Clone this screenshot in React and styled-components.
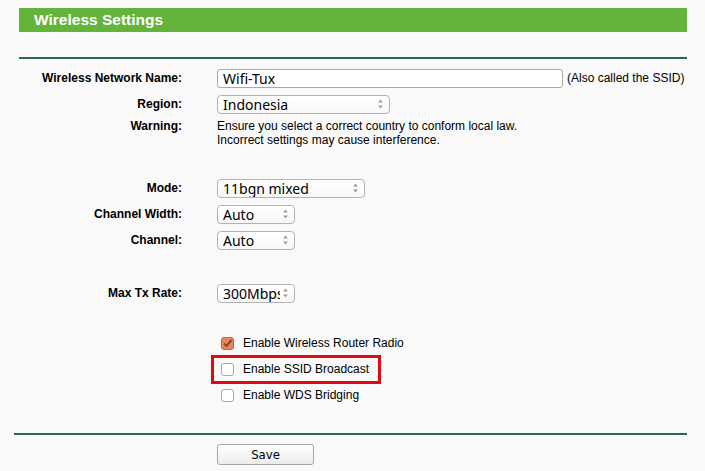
import React from "react";
import styled, { createGlobalStyle } from "styled-components";

const Global = createGlobalStyle`
  html, body { margin: 0; padding: 0; background: #f9f9f9; }
  body { font-family: "Liberation Sans", Arial, sans-serif; color: #000; }
`;

const Page = styled.div`
  width: 705px;
  height: 471px;
  overflow: hidden;
  padding-top: 8px;
  box-sizing: border-box;
`;

const Header = styled.div`
  margin-left: 19px;
  width: 668px;
  height: 24px;
  background: #64b33b;
  color: #fff;
  font-weight: bold;
  font-size: 15.5px;
  line-height: 24px;
  padding-left: 15px;
  box-sizing: border-box;
`;

const Rule = styled.div`
  margin-left: ${(p) => p.$left}px;
  width: ${(p) => 687 - p.$left}px;
  height: 2px;
  background: #2f6a48;
  margin-top: ${(p) => p.$top}px;
`;

const Form = styled.div`
  margin-left: 19px;
  width: 668px;
  padding-top: 6px;
  display: flex;
  flex-direction: column;
`;

const Row = styled.div`
  display: grid;
  grid-template-columns: 163px 1fr;
  column-gap: 35px;
  align-items: ${(p) => (p.$top ? "start" : "center")};
  height: ${(p) => p.$h || 26}px;
  margin-top: ${(p) => p.$mt || 0}px;
  position: relative;
`;

const Label = styled.div`
  text-align: right;
  font-weight: bold;
  font-size: 12px;
  line-height: 14px;
`;

const Control = styled.div`
  display: flex;
  align-items: center;
  gap: 4px;
`;

const TextInput = styled.div`
  width: 346px;
  height: 19px;
  box-sizing: border-box;
  border: 1px solid #a9a9a9;
  border-radius: 3px;
  background: #fff;
  font-family: "Noto Sans", sans-serif;
  font-size: 14px;
  line-height: 17px;
  padding-left: 5px;
`;

const Note = styled.span`
  font-size: 12px;
`;

const SelectBox = styled.div`
  width: ${(p) => p.$w}px;
  height: 19px;
  box-sizing: border-box;
  border: 1px solid #b3b3b3;
  border-radius: 4px;
  background: linear-gradient(#ffffff, #f7f7f7);
  font-family: "Noto Sans", sans-serif;
  font-size: 14px;
  line-height: 17px;
  padding-left: 5px;
  display: flex;
  align-items: center;
  overflow: hidden;
  white-space: nowrap;
`;

const SelectText = styled.span`
  overflow: hidden;
  text-overflow: clip;
  flex: 1;
  min-width: 0;
`;

const Arrows = styled.svg`
  flex: none;
  width: 7px;
  height: 12px;
  margin: 0 5px 0 2px;
`;

const WarnText = styled.div`
  font-size: 12px;
  line-height: 14px;
`;

const CheckRow = styled.div`
  display: flex;
  align-items: center;
  gap: 9px;
  padding-left: 4px;
  font-size: 12px;
  line-height: 14px;
  position: relative;
`;

const Box = styled.span`
  width: 13px;
  height: 13px;
  box-sizing: border-box;
  border-radius: 3px;
  border: 1px solid ${(p) => (p.$on ? "#c8673f" : "#a8a8a8")};
  background: ${(p) => (p.$on ? "#e8875e" : "#fff")};
  display: inline-flex;
  align-items: center;
  justify-content: center;
`;

const Highlight = styled.span`
  position: absolute;
  left: -6px;
  top: -7px;
  width: 170px;
  height: 29px;
  box-sizing: border-box;
  border: 3px solid #e30613;
  pointer-events: none;
`;

const ButtonRow = styled.div`
  display: grid;
  grid-template-columns: 163px 1fr;
  column-gap: 35px;
  margin-left: 19px;
  margin-top: 9px;
`;

const SaveButton = styled.button`
  width: 97px;
  height: 21px;
  box-sizing: border-box;
  border: 1px solid #a6a6a6;
  border-radius: 3px;
  background: linear-gradient(#ffffff, #ececec);
  font-family: "DejaVu Sans Condensed", "DejaVu Sans", sans-serif;
  font-size: 13px;
  line-height: 17px;
  padding: 0;
  color: #000;
`;

const UpDown = () => (
  <Arrows viewBox="0 0 7 12">
    <path d="M3.5 1.5 L5.8 4.5 L1.2 4.5 Z" fill="#999" />
    <path d="M3.5 10.5 L5.8 7.5 L1.2 7.5 Z" fill="#999" />
  </Arrows>
);

const Select = ({ w, children }) => (
  <SelectBox $w={w}>
    <SelectText>{children}</SelectText>
    <UpDown />
  </SelectBox>
);

const Checkbox = ({ on }) => (
  <Box $on={on}>
    {on && (
      <svg width="11" height="11" viewBox="0 0 11 11">
        <path d="M2 5.5 L4.5 8 L9.5 2" fill="none" stroke="#9c3f1d" strokeWidth="2" />
      </svg>
    )}
  </Box>
);

export default function App() {
  return (
    <Page>
      <Global />
      <Header>Wireless Settings</Header>
      <Rule $left={19} $top={25} />
      <Form>
        <Row>
          <Label>Wireless Network Name:</Label>
          <Control>
            <TextInput>Wifi-Tux</TextInput>
            <Note>(Also called the SSID)</Note>
          </Control>
        </Row>
        <Row>
          <Label>Region:</Label>
          <Control>
            <Select w={173}>Indonesia</Select>
          </Control>
        </Row>
        <Row $top $h={28} $mt={2}>
          <Label>Warning:</Label>
          <WarnText>
            Ensure you select a correct country to conform local law.
            <br />
            Incorrect settings may cause interference.
          </WarnText>
        </Row>
        <Row $mt={28}>
          <Label>Mode:</Label>
          <Control>
            <Select w={148}>11bgn mixed</Select>
          </Control>
        </Row>
        <Row>
          <Label>Channel Width:</Label>
          <Control>
            <Select w={78}>Auto</Select>
          </Control>
        </Row>
        <Row>
          <Label>Channel:</Label>
          <Control>
            <Select w={78}>Auto</Select>
          </Control>
        </Row>
        <Row $mt={27}>
          <Label>Max Tx Rate:</Label>
          <Control>
            <Select w={78}>300Mbps</Select>
          </Control>
        </Row>
        <Row $mt={24}>
          <span />
          <CheckRow>
            <Checkbox on />
            Enable Wireless Router Radio
          </CheckRow>
        </Row>
        <Row>
          <span />
          <CheckRow>
            <Highlight />
            <Checkbox />
            Enable SSID Broadcast
          </CheckRow>
        </Row>
        <Row>
          <span />
          <CheckRow>
            <Checkbox />
            Enable WDS Bridging
          </CheckRow>
        </Row>
      </Form>
      <Rule $left={14} $top={25} />
      <ButtonRow>
        <span />
        <SaveButton>Save</SaveButton>
      </ButtonRow>
    </Page>
  );
}
